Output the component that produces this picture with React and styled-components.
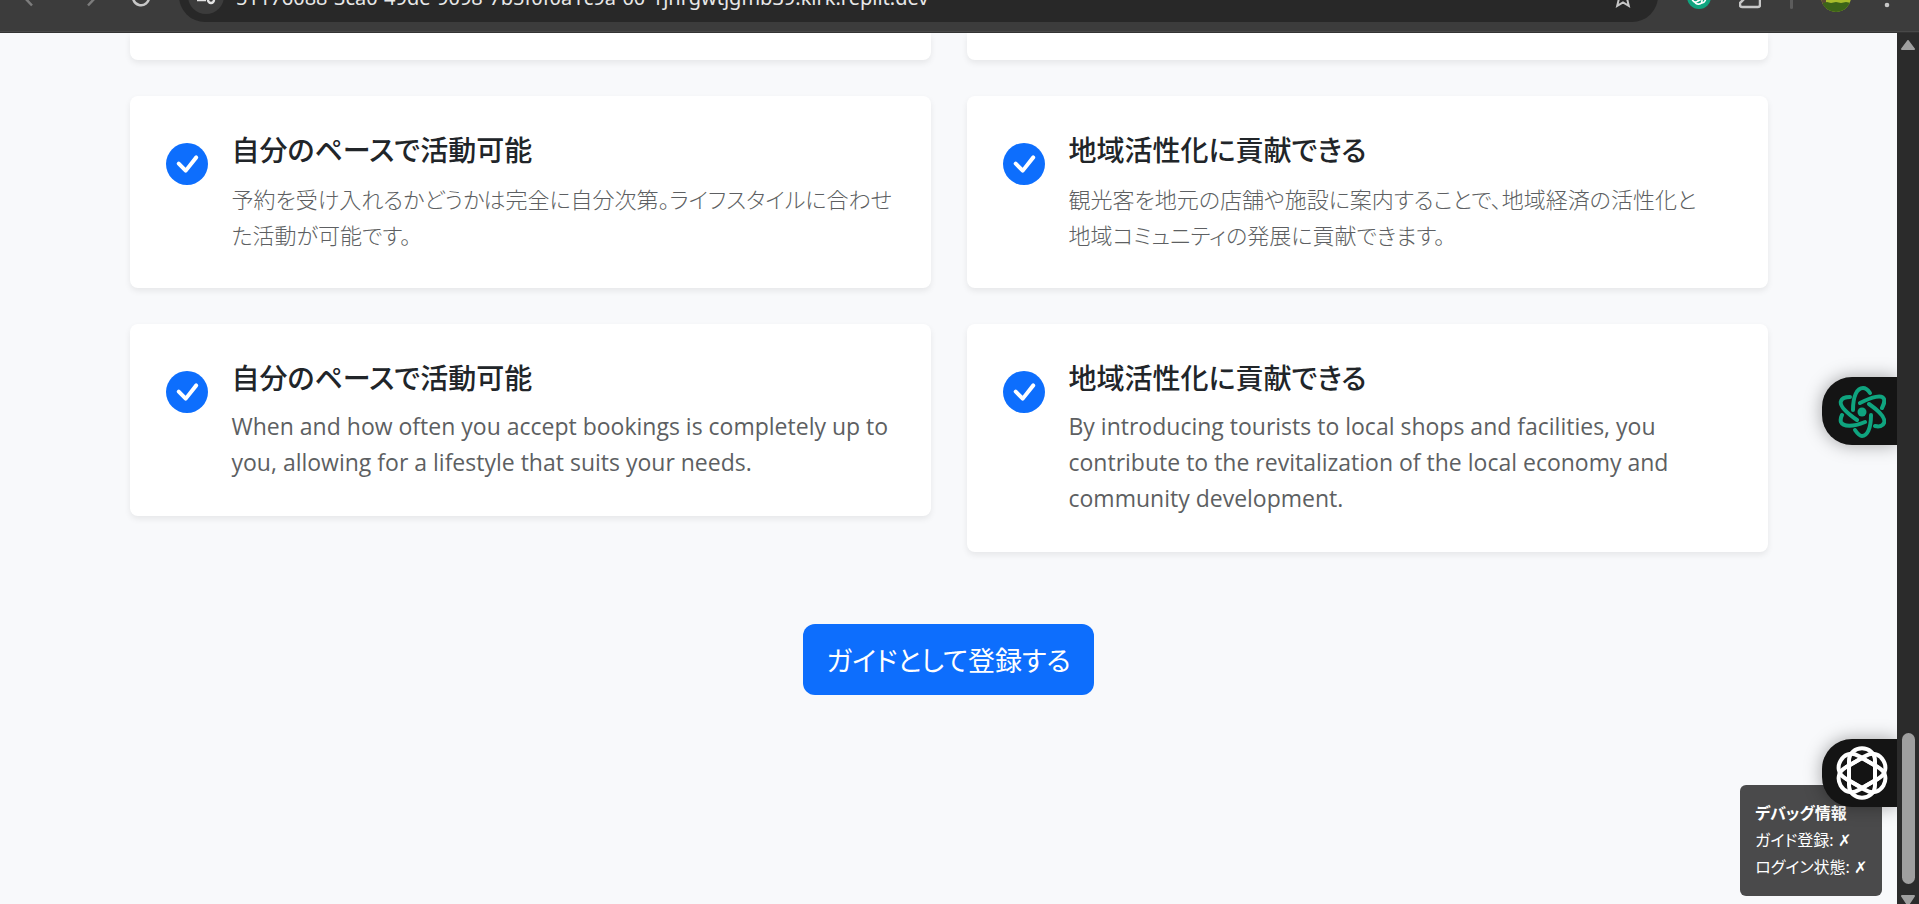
import React from "react";
import styled, { createGlobalStyle } from "styled-components";

const Global = createGlobalStyle`
  *, *::before, *::after { box-sizing: border-box; }
  body {
    margin: 0;
    background: #f8f9fb;
    color: #212529;
    font-family: "Noto Sans", "Noto Sans CJK JP", sans-serif;
    font-size: 24px;
    line-height: 36px;
    font-feature-settings: "palt";
  }
  h3, p { margin: 0; }
`;

const Shell = styled.div`
  height: 100vh;
  display: flex;
  flex-direction: column;
  overflow: hidden;
`;

/* Browser toolbar: its upper part runs off the top of the window */
const Toolbar = styled.header`
  flex: none;
  height: 33px;
  display: flex;
  align-items: flex-end;
  background: #3c3c3c;
  border-bottom: 1px solid #333;
  box-shadow: inset 0 -1px #484848;
  overflow: hidden;
`;
const NavButtons = styled.div`
  flex: none;
  width: 179px;
  height: 54px;
  padding: 0 27px 16px 22px;
  display: flex;
  justify-content: space-between;
  align-items: center;
`;
const IconButton = styled.button`
  border: 0;
  padding: 0;
  background: none;
  color: ${(p) => p.$color || "#c7c7c7"};
  display: flex;
  flex: none;
`;
const AddressBar = styled.div`
  flex: 1;
  height: 52px;
  margin-bottom: 10px;
  padding: 0 23px 0 9px;
  border-radius: 26px;
  background: #282828;
  display: flex;
  align-items: center;
  gap: 12px;
`;
const SiteInfo = styled.button`
  flex: none;
  width: 36px;
  height: 36px;
  border: 0;
  padding: 0;
  border-radius: 50%;
  background: #3c3c3c;
  color: #e3e3e3;
  display: flex;
  align-items: center;
  justify-content: center;
`;
const Url = styled.input`
  flex: 1;
  min-width: 0;
  height: 32px;
  border: 0;
  padding: 2px 0 0;
  background: none;
  color: #e8e8e8;
  font: 20px/30px "Noto Sans", sans-serif;
`;
const Extensions = styled.div`
  flex: none;
  width: 261px;
  height: 54px;
  padding: 0 24px 16px 29px;
  display: flex;
  align-items: center;
  justify-content: space-between;
`;
const Divider = styled.span`
  width: 3px;
  height: 24px;
  border-radius: 2px;
  background: #5c5c5c;
`;

const Viewport = styled.div`
  flex: 1;
  min-height: 0;
  display: flex;
`;
const Page = styled.main`
  flex: 1;
  min-width: 0;
  position: relative;
  overflow: hidden;
`;
const Container = styled.div`
  max-width: 1674px;
  margin: 0 auto;
  padding: 0 18px;
`;
const CardGrid = styled.div`
  display: grid;
  grid-template-columns: 1fr 1fr;
  gap: 36px;
  align-items: start;
`;
const Card = styled.article`
  display: flex;
  gap: 24px;
  padding: 36px;
  border-radius: 8px;
  background: #fff;
  box-shadow: 0 3px 6px rgba(0, 0, 0, 0.075);
`;
const CardEnd = styled.div`
  height: 27px;
  border-radius: 0 0 8px 8px;
  background: #fff;
  box-shadow: 0 3px 6px rgba(0, 0, 0, 0.075);
`;
const CheckBox = styled.span`
  flex: none;
  height: 63px;
  display: flex;
  align-items: center;
`;
const CardText = styled.div`
  min-width: 0;
`;
const CardTitle = styled.h3`
  margin-bottom: 12px;
  font-size: 28px;
  line-height: 36px;
  font-weight: 500;
`;
const CardBody = styled.p`
  color: #5d5f62;
  font-family: ${(p) =>
    p.lang === "ja"
      ? `"Noto Sans CJK JP", sans-serif`
      : `"Open Sans", sans-serif`};
  font-size: ${(p) => (p.lang === "ja" ? "22px" : "23px")};
  font-weight: ${(p) => (p.lang === "ja" ? 300 : 400)};
  white-space: pre-line;
`;
const Action = styled.div`
  margin-top: 72px;
  display: flex;
  justify-content: center;
`;
const RegisterButton = styled.button`
  border: 0;
  border-radius: 12px;
  padding: 12px 23px;
  background: #0d6efd;
  color: #fff;
  font: 400 27px/47px "Noto Sans CJK JP", sans-serif;
  font-feature-settings: "palt";
`;

const SideTab = styled.button`
  position: absolute;
  right: 0;
  top: ${(p) => p.$top};
  width: 75px;
  height: 68px;
  border: 0;
  padding: 0 0 0 5px;
  border-radius: 30px 0 0 30px;
  background: #141414;
  box-shadow: 0 0 18px rgba(0, 0, 0, 0.35);
  display: flex;
  align-items: center;
  justify-content: center;
  z-index: 2;
`;
const DebugPanel = styled.aside`
  position: absolute;
  right: 15px;
  bottom: 8px;
  min-width: 141px;
  padding: 15px;
  border-radius: 6px;
  background: rgba(0, 0, 0, 0.7);
  color: #fff;
  font-size: 16px;
  line-height: 27px;
  white-space: nowrap;
`;
const DebugTitle = styled.strong`
  display: block;
  font-weight: 700;
`;
const DebugRow = styled.div``;

const ScrollTrack = styled.div`
  flex: none;
  width: 22px;
  background: #2b2b2b;
  display: flex;
  flex-direction: column;
  align-items: center;
  padding-top: 7px;
  overflow: hidden;
`;
const ScrollSpace = styled.div`
  flex: 1;
`;
const Thumb = styled.div`
  flex: none;
  width: 13px;
  height: 151px;
  margin-bottom: 11px;
  border-radius: 7px;
  background: #9f9f9f;
`;

const Check = () => (
  <svg width="42" height="42" viewBox="0 0 16 16" aria-hidden="true">
    <circle cx="8" cy="8" r="8" fill="#0d6efd" />
    <path
      d="M12.03 4.97a.75.75 0 0 1 0 1.08l-3.992 4.99a.75.75 0 0 1-1.08.02L4.324 8.384a.75.75 0 1 1 1.06-1.06l2.094 2.093 3.473-4.425a.75.75 0 0 1 1.08-.022z"
      fill="#fff"
    />
  </svg>
);

const Arrow = ({ flip }) => (
  <svg width="22" height="22" viewBox="0 0 22 22" fill="none" stroke="currentColor" strokeWidth="2.5">
    <path d={flip ? "M2 11h17M12 3l8 8-8 8.500" : "M20 11H3M10 3l-8 8 8 8.500"} />
  </svg>
);

const Atom = () => (
  <svg width="48" height="54" viewBox="0 0 48 54" fill="none" stroke="#0fa47f" strokeWidth="4" strokeLinecap="round">
    <path d="M15 26C15 12 19 4 25 4c3 0 5 2 7 5" />
    <path d="M22 19c12-6 22-9 24-4 1 3 0 5-2 9" />
    <path d="M31 20c10 7 17 14 15 19-1 3-5 4-9 3" />
    <path d="M33 31c0 14-4 21-9 21-3 0-5-3-7-6" />
    <path d="M27 38C15 43 5 43 3 38c-1-3 0-5 1-7" />
    <path d="M19 36C9 29 1 22 3 17c1-3 5-4 9-4" />
    <circle cx="24" cy="28" r="4.5" fill="#0fa47f" stroke="none" />
  </svg>
);

const Knot = () => (
  <svg width="54" height="56" viewBox="-27 -28 54 56" fill="none" stroke="#fff" strokeWidth="4">
    {[0, 60, 120, 180, 240, 300].map((a) => (
      <path
        key={a}
        transform={`rotate(${a})`}
        d="M-13 11V-12C-13-29 13-29 13-12V11"
      />
    ))}
  </svg>
);

const cards = [
  {
    title: "自分のペースで活動可能",
    lang: "ja",
    body: "予約を受け入れるかどうかは完全に自分次第。ライフスタイルに合わせ\nた活動が可能です。",
  },
  {
    title: "地域活性化に貢献できる",
    lang: "ja",
    body: "観光客を地元の店舗や施設に案内することで、地域経済の活性化と\n地域コミュニティの発展に貢献できます。",
  },
  {
    title: "自分のペースで活動可能",
    lang: "en",
    body: "When and how often you accept bookings is completely up to you, allowing for a lifestyle that suits your needs.",
  },
  {
    title: "地域活性化に貢献できる",
    lang: "en",
    body: "By introducing tourists to local shops and facilities, you contribute to the revitalization of the local economy and community development.",
  },
];

export default function App() {
  return (
    <Shell>
      <Global />
      <Toolbar>
        <NavButtons>
          <IconButton aria-label="Back" $color="#7c7c7c"><Arrow /></IconButton>
          <IconButton aria-label="Forward" $color="#7c7c7c"><Arrow flip /></IconButton>
          <IconButton aria-label="Reload">
            <svg width="22" height="22" viewBox="0 0 22 22" fill="none" stroke="currentColor" strokeWidth="2.5">
              <path d="M17 6a8 8 0 1 0 2 5M19 1v6h-6" />
            </svg>
          </IconButton>
        </NavButtons>
        <AddressBar>
          <SiteInfo aria-label="Site information">
            <svg width="20" height="20" viewBox="0 0 20 20" fill="none" stroke="currentColor" strokeWidth="2.4">
              <circle cx="5" cy="5" r="3" /><path d="M10 5h9M1 14h9" /><circle cx="15" cy="14" r="3" />
            </svg>
          </SiteInfo>
          <Url aria-label="Address" readOnly value="51176088-3ca0-49de-9098-7b5f0f0a1c9a-00-1jnrgwtjgmb39.kirk.replit.dev" />
          <IconButton aria-label="Bookmark">
            <svg width="24" height="24" viewBox="0 0 24 24" fill="none" stroke="currentColor" strokeWidth="2">
              <path d="M12 4l2.600 6.200 6.700.6-5.100 4.400 1.600 6.600L12 18.300l-5.800 3.500 1.600-6.600-5.100-4.400 6.700-.6z" />
            </svg>
          </IconButton>
        </AddressBar>
        <Extensions>
          <IconButton aria-label="Assistant">
            <svg width="24" height="24" viewBox="-12 -12 24 24" fill="none" stroke="#fff" strokeWidth="1.600">
              <circle r="12" fill="#0fa47f" stroke="none" />
              {[0, 60, 120, 180, 240, 300].map((a) => (
                <path key={a} transform={`rotate(${a})`} d="M-3 2V-4C-3-8 3-8 4-5" />
              ))}
            </svg>
          </IconButton>
          <IconButton aria-label="Extensions">
            <svg width="22" height="24" viewBox="0 0 22 24" fill="none" stroke="currentColor" strokeWidth="2.500">
              <path d="M1 9q0-3 3-3h3q1-4 4-4t4 4h3q3 0 3 3v11q0 2-2 2H3q-2 0-2-2v-2l5-5" />
            </svg>
          </IconButton>
          <Divider />
          <IconButton aria-label="Profile">
            <svg width="30" height="30" viewBox="0 0 30 30">
              <defs><clipPath id="face"><circle cx="15" cy="15" r="15" /></clipPath></defs>
              <g clipPath="url(#face)">
                <path d="M0 0h30v30H0z" fill="#a9bd2c" />
                <path d="M0 0h5v30H0z" fill="#5b4a35" />
                <path d="M2 21l4-1 4 1 5-1 5 1 5-1 5 1v9H2z" fill="#3c6418" />
              </g>
            </svg>
          </IconButton>
          <IconButton aria-label="Menu">
            <svg width="16" height="24" viewBox="0 0 16 24" fill="currentColor">
              <circle cx="8" cy="4" r="2.300" /><circle cx="8" cy="12" r="2.300" /><circle cx="8" cy="20" r="2.300" />
            </svg>
          </IconButton>
        </Extensions>
      </Toolbar>
      <Viewport>
        <Page>
          <Container>
            <CardGrid>
              <CardEnd />
              <CardEnd />
              {cards.map((c, i) => (
                <Card key={i}>
                  <CheckBox><Check /></CheckBox>
                  <CardText>
                    <CardTitle lang="ja">{c.title}</CardTitle>
                    <CardBody lang={c.lang}>{c.body}</CardBody>
                  </CardText>
                </Card>
              ))}
            </CardGrid>
            <Action>
              <RegisterButton>ガイドとして登録する</RegisterButton>
            </Action>
          </Container>
          <SideTab aria-label="Open assistant" $top="344px"><Atom /></SideTab>
          <SideTab aria-label="Open chat" $top="706px"><Knot /></SideTab>
          <DebugPanel>
            <DebugTitle>デバッグ情報</DebugTitle>
            <DebugRow>ガイド登録: ✗</DebugRow>
            <DebugRow>ログイン状態: ✗</DebugRow>
          </DebugPanel>
        </Page>
        <ScrollTrack>
          <svg width="16" height="11" viewBox="0 0 16 11"><path d="M8 1l6 8H2z" fill="#9f9f9f" stroke="#9f9f9f" strokeWidth="2" strokeLinejoin="round" /></svg>
          <ScrollSpace />
          <Thumb />
          <svg width="16" height="9" viewBox="0 0 16 9"><path d="M8 10L2 1h12z" fill="#9f9f9f" stroke="#9f9f9f" strokeWidth="2" strokeLinejoin="round" /></svg>
        </ScrollTrack>
      </Viewport>
    </Shell>
  );
}
